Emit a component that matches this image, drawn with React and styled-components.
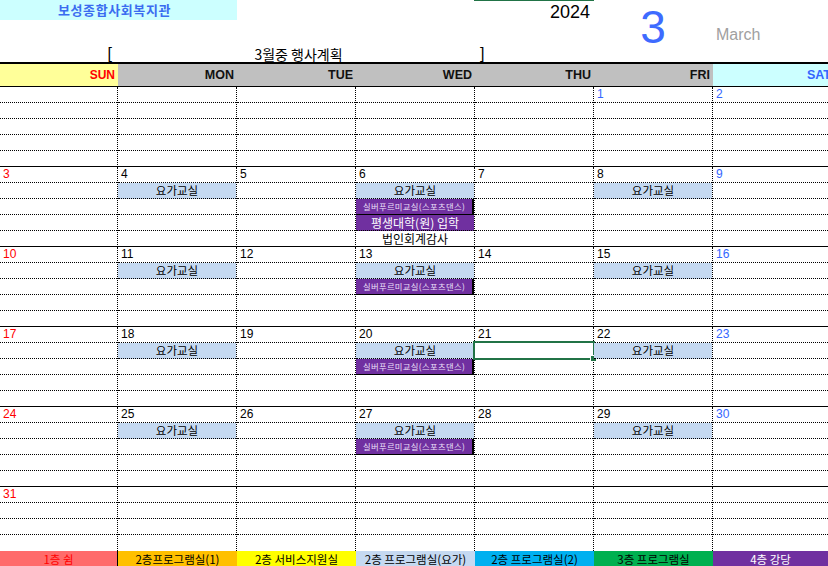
import React from 'react';
import styled, { createGlobalStyle } from 'styled-components';

const GlobalStyle = createGlobalStyle`
  html, body { margin: 0; padding: 0; background: #fff; }
  body { font-family: "Liberation Sans", "Noto Sans CJK KR", sans-serif; }
  #root { width: 828px; height: 566px; }
`;

const COLS = '118px 119px 119px 119px 119px 119px 115px';
const KR = '"Noto Sans CJK KR", "Liberation Sans", sans-serif';

const Page = styled.div`
  width: 828px;
  height: 566px;
  overflow: hidden;
  position: relative;
  background: #fff;
`;

const Top = styled.div`
  height: 62px;
  border-top: 1px solid #d4d4d4;
  border-bottom: 2px solid #000;
  box-sizing: content-box;
  margin-top: -1px;
  display: grid;
  grid-template-columns: ${COLS};
  grid-template-rows: 21px 21px 20px;
  position: relative;
`;

const SelectedColMark = styled.div`
  position: absolute;
  top: -1px;
  left: 474px;
  width: 120px;
  height: 2px;
  background: #217346;
`;

const OrgName = styled.div`
  grid-column: 1 / 3;
  grid-row: 1;
  height: 20px;
  background: #ccffff;
  color: #3a6cf0;
  font-family: ${KR};
  font-weight: 700;
  font-size: 13px;
  letter-spacing: 0.6px;
  line-height: 20px;
  text-align: center;
  padding-right: 8px;
`;

const Year = styled.div`
  grid-column: 5;
  grid-row: 1;
  font-size: 18px;
  line-height: 24px;
  text-align: right;
  padding-right: 4px;
  color: #000;
`;

const MonthNum = styled.div`
  grid-column: 6;
  grid-row: 1 / 3;
  font-size: 46px;
  line-height: 46px;
  margin-top: 4px;
  text-align: center;
  color: #3e6bff;
  padding-right: 1px;
`;

const MonthName = styled.div`
  grid-column: 7;
  grid-row: 1 / 4;
  font-size: 16px;
  line-height: 16px;
  margin-top: 27px;
  padding-left: 3px;
  color: #a0a0a0;
`;

const Bracket = styled.div`
  grid-row: 3;
  grid-column: ${p => p.$col};
  text-align: ${p => p.$align};
  padding: ${p => (p.$align === 'right' ? '0 6px 0 0' : '0 0 0 5px')};
  font-family: "Liberation Sans", sans-serif;
  color: #000;
  font-size: 16px;
  line-height: 17px;
  align-self: end;
`;

const Title = styled.div`
  grid-row: 3;
  grid-column: 2 / 5;
  text-align: center;
  font-family: ${KR};
  font-size: 14px;
  line-height: 16px;
  align-self: end;
  padding-left: 4px;
  color: #000;
`;

const HeaderRow = styled.div`
  display: grid;
  grid-template-columns: ${COLS};
  height: 22px;
  border-bottom: 1px solid #000;
`;

const HeaderCell = styled.div`
  background: ${p => p.$bg};
  color: ${p => p.$color};
  font-weight: 700;
  font-size: ${p => p.$size || 12.5}px;
  line-height: 22px;
  text-align: right;
  padding-right: 3px;
  margin-right: ${p => (p.$clip ? '-6px' : '0')};
  white-space: nowrap;
  overflow: hidden;
`;

const Week = styled.div`
  display: grid;
  grid-template-columns: ${COLS};
`;

const DayCell = styled.div`
  display: flex;
  flex-direction: column;
  border-right: ${p => (p.$last ? 'none' : '1px dotted #000')};
  box-sizing: border-box;
  min-width: 0;
`;

const DateRow = styled.div`
  height: 15px;
  border-bottom: 1px dotted #000;
  font-size: 12px;
  line-height: 15px;
  padding-left: 3px;
  color: ${p => p.$color};
`;

const Slot = styled.div`
  position: relative;
  height: 15px;
  border-bottom: ${p => (p.$end ? (p.$none ? '1px solid transparent' : '1px solid #000') : '1px dotted #000')};
  background: ${p => p.$bg || 'transparent'};
  color: ${p => p.$color || '#000'};
  font-family: ${KR};
  font-size: ${p => p.$size || 11.5}px;
  line-height: 15px;
  text-align: center;
  white-space: nowrap;
  overflow: hidden;
  box-sizing: content-box;
`;

const SilverSlot = styled(Slot)`
  border-bottom: 1px solid #000;
  border-right: 2px solid #000;
  letter-spacing: 0.35px;
`;

const Selection = styled.div`
  position: absolute;
  top: -2px;
  left: -2px;
  right: -2px;
  bottom: -2px;
  border: 2px solid #217346;
  pointer-events: none;
`;

const SelHost = styled.div`
  position: relative;
  height: 15px;
  border-bottom: 1px dotted #000;
`;

const Handle = styled.div`
  position: absolute;
  right: -4px;
  bottom: -4px;
  width: 5px;
  height: 5px;
  background: #217346;
  border: 1px solid #fff;
`;

const Legend = styled.div`
  display: grid;
  grid-template-columns: ${COLS};
  height: 16px;
`;

const LegendCell = styled.div`
  background: ${p => p.$bg};
  color: ${p => p.$color};
  border-right: ${p => (p.$sep ? '1px solid #000' : 'none')};
  font-family: ${KR};
  font-size: 11.5px;
  line-height: 16px;
  text-align: center;
  white-space: nowrap;
`;

const EVENTS = {
  yoga: { text: '요가교실', bg: '#c5d9f1', color: '#000', size: 11.5 },
  silver: { text: '실버푸르미교실(스포츠댄스)', bg: '#7030a0', color: '#ece0f8', size: 8.3 },
  univ: { text: '평생대학(원) 입학', bg: '#7030a0', color: '#fff', size: 12 },
  audit: { text: '법인회계감사', bg: '#fff', color: '#000', size: 12 },
};

const RED = '#ff0000';
const BLUE = '#3366ff';

const weeks = [
  [null, null, null, null, null, { d: 1, c: BLUE }, { d: 2 }],
  [{ d: 3 }, { d: 4, ev: ['yoga'] }, { d: 5 }, { d: 6, ev: ['yoga', 'silver', 'univ', 'audit'] }, { d: 7 }, { d: 8, ev: ['yoga'] }, { d: 9 }],
  [{ d: 10 }, { d: 11, ev: ['yoga'] }, { d: 12 }, { d: 13, ev: ['yoga', 'silver'] }, { d: 14 }, { d: 15, ev: ['yoga'] }, { d: 16 }],
  [{ d: 17 }, { d: 18, ev: ['yoga'] }, { d: 19 }, { d: 20, ev: ['yoga', 'silver'] }, { d: 21, sel: true }, { d: 22, ev: ['yoga'] }, { d: 23 }],
  [{ d: 24 }, { d: 25, ev: ['yoga'] }, { d: 26 }, { d: 27, ev: ['yoga', 'silver'] }, { d: 28 }, { d: 29, ev: ['yoga'] }, { d: 30 }],
  [{ d: 31 }, null, null, null, null, null, null],
];

const headers = [
  { t: 'SUN', bg: '#ffff99', color: RED, size: 12 },
  { t: 'MON', bg: '#c0c0c0', color: '#111' },
  { t: 'TUE', bg: '#c0c0c0', color: '#111' },
  { t: 'WED', bg: '#c0c0c0', color: '#111' },
  { t: 'THU', bg: '#c0c0c0', color: '#111' },
  { t: 'FRI', bg: '#c0c0c0', color: '#111' },
  { t: 'SAT', bg: '#ccffff', color: BLUE, clip: true },
];

const legend = [
  { t: '1층 쉼', bg: '#ff6b6b', color: '#ff0000', sep: true },
  { t: '2층프로그램실(1)', bg: '#ffc000', color: '#000' },
  { t: '2층 서비스지원실', bg: '#ffff00', color: '#000' },
  { t: '2층 프로그램실(요가)', bg: '#c5d9f1', color: '#000' },
  { t: '2층 프로그램실(2)', bg: '#00b0f0', color: '#000' },
  { t: '3층 프로그램실', bg: '#00b050', color: '#000' },
  { t: '4층 강당', bg: '#7030a0', color: '#fff' },
];

function dateColor(col, day) {
  if (day && day.c) return day.c;
  if (col === 0) return RED;
  if (col === 6) return BLUE;
  return '#000';
}

function Day({ day, col, slots }) {
  const ev = (day && day.ev) || [];
  const rows = [];
  for (let i = 0; i < slots; i++) {
    const key = ev[i];
    const isEnd = i === slots - 1;
    const none = slots === 3;
    if (key === 'silver') {
      const e = EVENTS[key];
      rows.push(
        <SilverSlot key={i} $bg={e.bg} $color={e.color} $size={e.size}>{e.text}</SilverSlot>
      );
    } else if (key) {
      const e = EVENTS[key];
      rows.push(
        <Slot key={i} $end={isEnd} $none={none} $bg={e.bg} $color={e.color} $size={e.size}>{e.text}</Slot>
      );
    } else if (day && day.sel && i === 0) {
      rows.push(
        <SelHost key={i}>
          <Selection>
            <Handle />
          </Selection>
        </SelHost>
      );
    } else {
      rows.push(<Slot key={i} $end={isEnd} $none={none} />);
    }
  }
  return (
    <DayCell $last={col === 6}>
      <DateRow $color={dateColor(col, day)}>{day ? day.d : ''}</DateRow>
      {rows}
    </DayCell>
  );
}

export default function App() {
  return (
    <Page>
      <GlobalStyle />
      <Top>
        <SelectedColMark />
        <OrgName>보성종합사회복지관</OrgName>
        <Year>2024</Year>
        <MonthNum>3</MonthNum>
        <MonthName>March</MonthName>
        <Bracket $col={1} $align="right">[</Bracket>
        <Title>3월중 행사계획</Title>
        <Bracket $col={5} $align="left">]</Bracket>
      </Top>
      <HeaderRow>
        {headers.map(h => (
          <HeaderCell key={h.t} $bg={h.bg} $color={h.color} $size={h.size} $clip={h.clip}>{h.t}</HeaderCell>
        ))}
      </HeaderRow>
      {weeks.map((w, wi) => (
        <Week key={wi}>
          {w.map((day, ci) => (
            <Day key={ci} day={day} col={ci} slots={wi === 5 ? 3 : 4} />
          ))}
        </Week>
      ))}
      <Legend>
        {legend.map(l => (
          <LegendCell key={l.t} $bg={l.bg} $color={l.color} $sep={l.sep}>{l.t}</LegendCell>
        ))}
      </Legend>
    </Page>
  );
}
